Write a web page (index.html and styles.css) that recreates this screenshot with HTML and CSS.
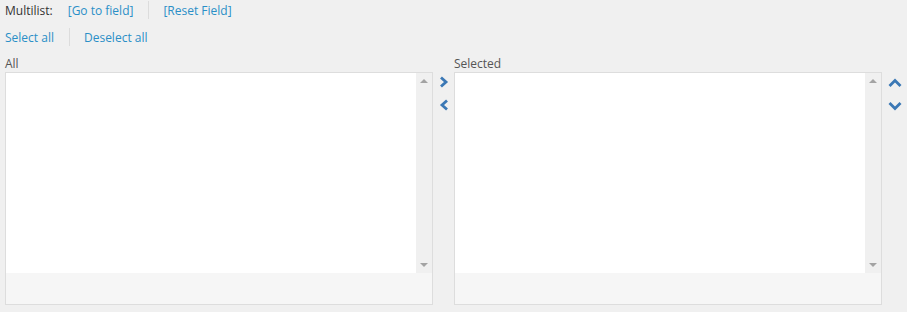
FILE: index.html
```html
<!DOCTYPE html>
<html lang="en">
<head>
    <meta charset="UTF-8">
    <title>Multilist</title>
    <link rel="stylesheet" href="styles.css">
</head>
<body>
    <div class="field-bar">
        <span class="field-name">Multilist:</span>
        <a class="link first">[Go to field]</a>
        <span class="sep"></span>
        <a class="link reset">[Reset Field]</a>
    </div>

    <div class="select-bar">
        <a class="link">Select all</a>
        <span class="sep"></span>
        <a class="link">Deselect all</a>
    </div>

    <div class="multilist">
        <div class="list-col">
            <div class="list-label">All</div>
            <div class="list-box">
                <div class="list-body">
                    <div class="list-items"></div>
                    <div class="scroll">
                        <span class="tri up"></span>
                        <span class="tri down"></span>
                    </div>
                </div>
                <div class="list-foot"></div>
            </div>
        </div>

        <div class="move-btns">
            <svg width="10" height="12" viewBox="0 0 10 12"><path d="M2 1.5 L7 6 L2 10.5" fill="none" stroke="#3b78b5" stroke-width="2.8"/></svg>
            <svg width="10" height="12" viewBox="0 0 10 12"><path d="M8 1.5 L3 6 L8 10.5" fill="none" stroke="#3b78b5" stroke-width="2.8"/></svg>
        </div>

        <div class="list-col">
            <div class="list-label">Selected</div>
            <div class="list-box">
                <div class="list-body">
                    <div class="list-items"></div>
                    <div class="scroll">
                        <span class="tri up"></span>
                        <span class="tri down"></span>
                    </div>
                </div>
                <div class="list-foot"></div>
            </div>
        </div>

        <div class="order-btns">
            <svg width="14" height="10" viewBox="0 0 14 10"><path d="M1.5 8 L7 2.5 L12.5 8" fill="none" stroke="#3b78b5" stroke-width="2.8"/></svg>
            <svg width="14" height="10" viewBox="0 0 14 10"><path d="M1.5 2 L7 7.5 L12.5 2" fill="none" stroke="#3b78b5" stroke-width="2.8"/></svg>
        </div>
    </div>
</body>
</html>
```

FILE: styles.css
```css
* {
    margin: 0;
    padding: 0;
    box-sizing: border-box;
}

body {
    font-family: "Open Sans", Arial, sans-serif;
    font-size: 12px;
    color: #333;
    background-color: #f0f0f0;
    padding: 0 0 0 5px;
}

.field-bar,
.select-bar {
    display: flex;
    align-items: center;
    height: 20px;
}

.select-bar {
    margin-top: 7px;
}

.field-name {
    color: #333;
}

.link {
    color: #2a8fc7;
    cursor: pointer;
}

.link.first {
    margin-left: 15px;
}

.sep {
    width: 1px;
    height: 18px;
    background-color: #dcdcdc;
    margin: 0 14px 0 15px;
}

.multilist {
    display: flex;
    margin-top: 9px;
}

.list-col {
    width: 429px;
}

.list-label {
    height: 16px;
    line-height: 16px;
    color: #555;
}

.list-box {
    border: 1px solid #dddddd;
    background-color: #f6f6f6;
}

.list-body {
    display: flex;
    height: 200px;
    background-color: #fff;
}

.list-items {
    flex: 1;
}

.scroll {
    width: 16px;
    background-color: #f0f0f0;
    position: relative;
}

.tri {
    position: absolute;
    left: 4px;
    width: 0;
    height: 0;
    border-left: 4px solid transparent;
    border-right: 4px solid transparent;
}

.tri.up {
    top: 6px;
    border-bottom: 4px solid #a3a3a3;
}

.tri.down {
    bottom: 6px;
    border-top: 4px solid #a3a3a3;
}

.list-foot {
    height: 31px;
}

.move-btns,
.order-btns {
    display: flex;
    flex-direction: column;
    align-items: center;
    gap: 11px;
    padding-top: 20px;
}

.move-btns {
    width: 21px;
}

.order-btns {
    width: 25px;
    gap: 13px;
    padding-top: 22px;
}
```
